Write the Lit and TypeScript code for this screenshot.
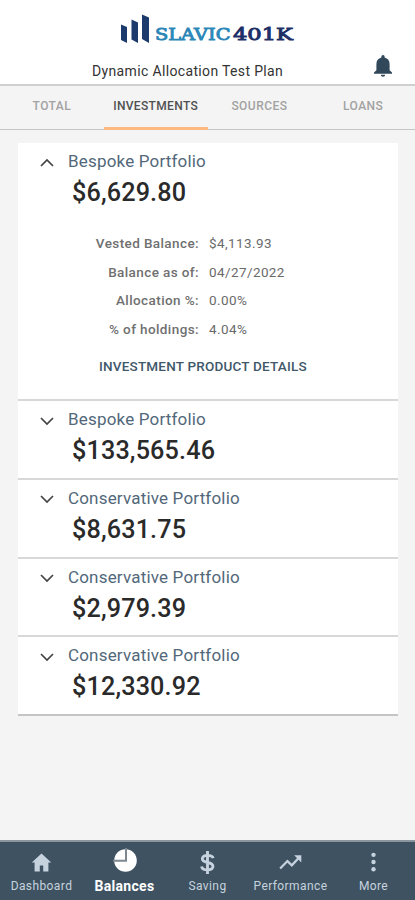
import { LitElement, html, css, svg } from "lit";
import { customElement, property } from "lit/decorators.js";
import { classMap } from "lit/directives/class-map.js";

interface Holding {
  name: string;
  amount: string;
  details?: [string, string][];
}

const holdings: Holding[] = [
  {
    name: "Bespoke Portfolio",
    amount: "$6,629.80",
    details: [
      ["Vested Balance:", "$4,113.93"],
      ["Balance as of:", "04/27/2022"],
      ["Allocation %:", "0.00%"],
      ["% of holdings:", "4.04%"],
    ],
  },
  { name: "Bespoke Portfolio", amount: "$133,565.46" },
  { name: "Conservative Portfolio", amount: "$8,631.75" },
  { name: "Conservative Portfolio", amount: "$2,979.39" },
  { name: "Conservative Portfolio", amount: "$12,330.92" },
];

@customElement("plan-header")
class PlanHeader extends LitElement {
  static styles = css`
    :host { display: block; height: 84px; background: #fff; border-bottom: 2px solid #d0d0d0; }
    .logo { display: block; margin: 0 auto; width: 176px; height: 58px; }
    .brand { font-family: "DejaVu Serif", serif; stroke-width: 0.9px; }
    .row { display: grid; grid-template-columns: 92px 1fr 65px; align-items: center; height: 26px; }
    .title { grid-column: 2; font-size: 14px; letter-spacing: 0.35px; color: #333; white-space: nowrap; line-height: 26px; }
    .bell { justify-self: center; width: 20px; height: 24px; margin: -11px 0 0 0; }
  `;
  render() {
    return html`
      <svg class="logo" viewBox="120.500 0 176 58">
        <g fill="#1d3a6c">
          <path d="M121.500 24.500l6 2.500v16l-6-3z" />
          <path d="M132 19.500l6.500 3v20.500l-6.500-3.500z" />
          <path d="M142.500 14.500l7 3v25.500l-7-4z" />
        </g>
        <text class="brand" x="155.500" y="40" font-size="17" fill="#2c87b8" stroke="#2c87b8" textLength="75.500" lengthAdjust="spacingAndGlyphs">SLAVIC</text>
        <text class="brand" x="233.500" y="40" font-size="17" fill="#1c2f66" stroke="#1c2f66" textLength="60" lengthAdjust="spacingAndGlyphs">401K</text>
      </svg>
      <div class="row">
        <div class="title">Dynamic Allocation Test Plan</div>
        <svg class="bell" viewBox="0 0 20 24" fill="#30485a">
          <path d="M8.400 3.500V2.600a1.600 1.600 0 0 1 3.200 0v.9c3.300.8 5 3.300 5 6.700v6l2.400 2.300v1.200H1v-1.200l2.400-2.300v-6c0-3.400 1.700-5.900 5-6.700zM7.800 20.700h4.400a2.200 2 0 0 1-4.400 0z" />
        </svg>
      </div>
    `;
  }
}

@customElement("balance-tabs")
class BalanceTabs extends LitElement {
  static styles = css`
    :host { display: grid; grid-template-columns: repeat(4, 1fr); height: 43px; border-bottom: 1px solid #c6c6c6; }
    .tab { display: flex; align-items: center; justify-content: center; box-sizing: border-box; height: 44px; padding-bottom: 1px; border-bottom: 3px solid transparent; font-size: 12px; font-weight: 500; letter-spacing: 0.45px; color: #a2a2a2; }
    .active { color: #505050; border-color: #fdb980; letter-spacing: 0.35px; }
  `;
  render() {
    return ["TOTAL", "INVESTMENTS", "SOURCES", "LOANS"].map(
      (t, i) => html`<div class=${classMap({ tab: true, active: i === 1 })}>${t}</div>`
    );
  }
}

@customElement("holding-row")
class HoldingRow extends LitElement {
  @property({ attribute: false }) holding!: Holding;

  static styles = css`
    :host { display: block; box-sizing: border-box; height: 78.750px; padding: 8px 0 0 21px; background: #fff; border-bottom: 2px solid #d8d8d8; }
    :host([open]) { height: 258px; }
    :host(:last-of-type) { border-bottom-color: #c4c4c4; }
    .head { display: grid; grid-template-columns: 29px 1fr; align-items: center; }
    .chevron { width: 16px; height: 10px; margin-top: 3px; }
    .name { font-size: 17px; line-height: 20px; letter-spacing: 0.18px; color: #52687a; }
    .amount { margin: 6px 0 0 33px; font-size: 25.200px; line-height: 32px; font-weight: 500; letter-spacing: 0.150px; color: #2a2a2a; }
    .details { display: grid; grid-template-columns: 160px 1fr; column-gap: 10px; grid-auto-rows: 28.700px; align-items: center; margin-top: 19.500px; font-size: 13.500px; letter-spacing: 0.4px; color: #6a6a6a; }
    .label { text-align: right; font-weight: 500; color: #707070; }
    .link { margin: 14px 0 0 60px; font-size: 13.500px; line-height: 18px; font-weight: 500; letter-spacing: 0.2px; color: #40586a; white-space: nowrap; }
  `;
  render() {
    const { name, amount, details } = this.holding;
    return html`
      <div class="head">
        <svg class="chevron" viewBox="0 0 16 10" fill="none" stroke="#444" stroke-width="1.700">
          <path d=${details ? "M2 8l6-6 6 6" : "M2 2l6 6 6-6"} />
        </svg>
        <div class="name">${name}</div>
      </div>
      <div class="amount">${amount}</div>
      ${details
        ? html`<div class="details">
              ${details.map(([k, v]) => html`<div class="label">${k}</div><div>${v}</div>`)}
            </div>
            <div class="link">INVESTMENT PRODUCT DETAILS</div>`
        : null}
    `;
  }
}

const navItems = [
  { label: "Dashboard", icon: svg`<path d="M12 2.500L1.800 12h3v9.500h5.400v-6.400h3.600v6.400h5.400V12h3z" />` },
  { label: "Balances", icon: svg`<circle cx="12.500" cy="12.500" r="11.300" /><path d="M13 0v12.800H0" fill="none" stroke="#7d8891" stroke-width="2" />` },
  { label: "Saving", icon: svg`<path d="M18 7.400C17.300 5.300 15.200 4.500 12 4.500S6.600 5.800 6.600 8.200s2 3.100 5.400 3.800 5.700 1.500 5.700 4-2.300 3.700-5.700 3.700-5.700-1.100-6.200-3.600M12 0v24" fill="none" stroke="currentColor" stroke-width="3" />` },
  { label: "Performance", icon: svg`<path d="M1.200 18.200l7.600-7.700 4.600 4.500 7.800-8.500" fill="none" stroke="currentColor" stroke-width="2.400" /><path d="M15.800 4.500H23.300V12z" />` },
  { label: "More", icon: svg`<circle cx="12" cy="4" r="2.300" /><circle cx="12" cy="11.500" r="2.300" /><circle cx="12" cy="19" r="2.300" />` },
];

@customElement("bottom-nav")
class BottomNav extends LitElement {
  static styles = css`
    :host { display: grid; grid-template-columns: repeat(5, 1fr); height: 58px; border-top: 2px solid #8a959d; background: #3e5262; }
    .item { display: flex; flex-direction: column; align-items: center; padding-top: 9px; color: #c6d2de; font-size: 12px; line-height: 16px; letter-spacing: 0.4px; }
    .icon { width: 23px; height: 23px; margin-bottom: 4px; }
    .active { padding-top: 6px; color: #fff; font-size: 14px; font-weight: 700; letter-spacing: 0.3px; }
    .active .icon { width: 24px; height: 24px; margin-bottom: 6px; }
  `;
  render() {
    return navItems.map(
      (n, i) => html`<div class=${classMap({ item: true, active: i === 1 })}>
        <svg class="icon" viewBox="0 0 24 24" fill="currentColor">${n.icon}</svg>
        <span>${n.label}</span>
      </div>`
    );
  }
}

@customElement("app-root")
class AppRoot extends LitElement {
  static styles = css`
    :host { display: flex; flex-direction: column; height: 900px; background: #f4f4f4; font-family: Roboto, sans-serif; }
    .list { flex: 1; padding: 13px 17px 0 18px; }
  `;
  render() {
    return html`
      <plan-header></plan-header>
      <balance-tabs></balance-tabs>
      <main class="list">
        ${holdings.map((h) => html`<holding-row .holding=${h} ?open=${!!h.details}></holding-row>`)}
      </main>
      <bottom-nav></bottom-nav>
    `;
  }
}
